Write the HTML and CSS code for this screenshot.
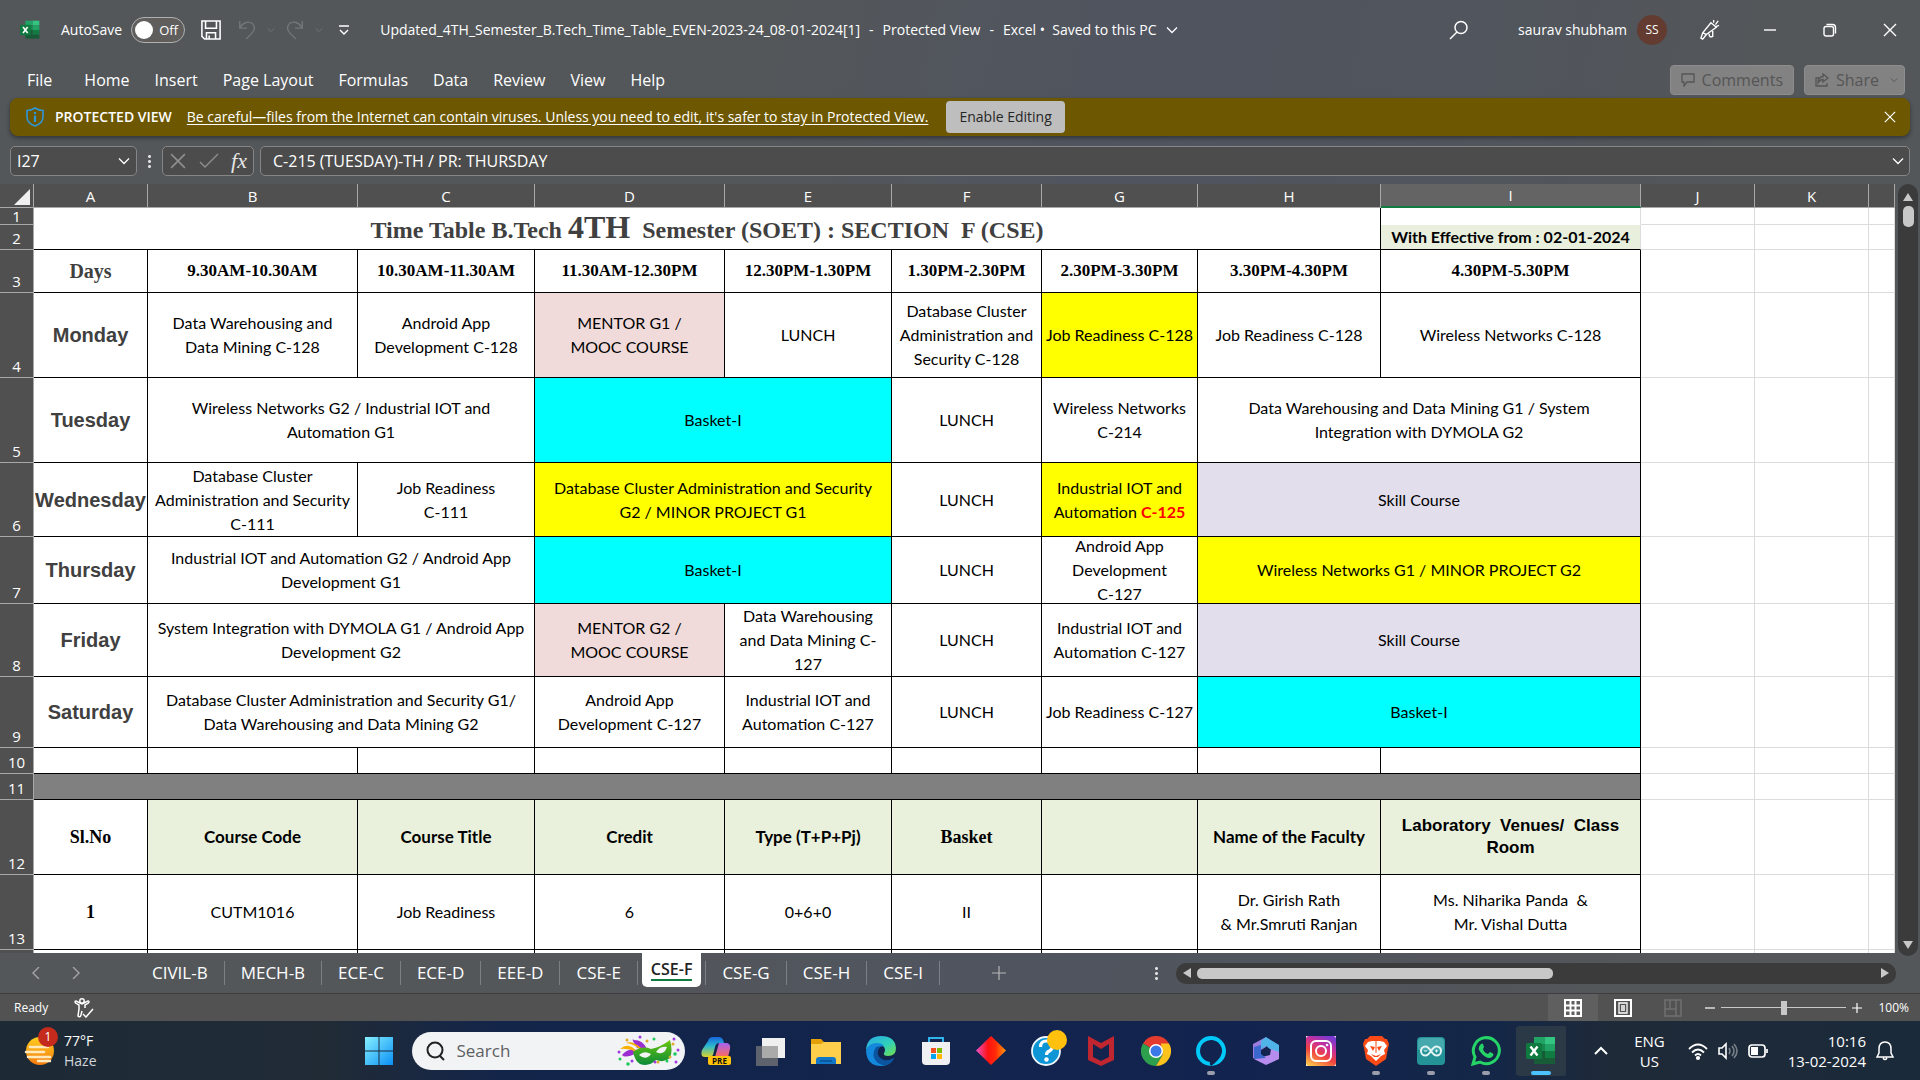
FILE: index.html
```html
<!DOCTYPE html>
<html lang="en">
<head>
<meta charset="utf-8">
<title>Updated_4TH_Semester_B.Tech_Time_Table - Excel</title>
<link rel="stylesheet" href="styles.css">
</head>
<body>
<svg class="defs" aria-hidden="true">
  <defs>
    <symbol id="chev" viewBox="0 0 12 12"><path d="M1 3.5l5 5 5-5" fill="none" stroke="currentColor" stroke-width="1.3"/></symbol>
    <symbol id="close" viewBox="0 0 14 14"><path d="M1 1l12 12M13 1L1 13" fill="none" stroke="currentColor" stroke-width="1.4"/></symbol>
    <symbol id="excel" viewBox="0 0 30 30">
      <rect x="8" y="1" width="11" height="7" fill="#21a366"/><rect x="19" y="1" width="10" height="7" fill="#33c481"/>
      <rect x="8" y="8" width="11" height="7" fill="#17884b"/><rect x="19" y="8" width="10" height="7" fill="#21a366"/>
      <rect x="8" y="15" width="11" height="7" fill="#185c37"/><rect x="19" y="15" width="10" height="7" fill="#107c41"/>
      <rect x="8" y="22" width="21" height="6" fill="#185c37"/>
      <rect x="0" y="7" width="16" height="16" rx="1.5" fill="#0f7a3f"/>
      <path d="M4.5 10.5l7 9M11.5 10.5l-7 9" stroke="#fff" stroke-width="2.4" fill="none"/>
    </symbol>
  </defs>
</svg>
<div class="app">
  <header class="titlebar">
    <svg class="i20"><use href="#excel"/></svg>
    <label class="autosave">AutoSave <span class="toggle"><input type="checkbox" role="switch"><span>Off</span></span></label>
    <button class="save" aria-label="Save"><svg class="i22" viewBox="0 0 22 22" fill="none" stroke="currentColor" stroke-width="1.7"><path d="M1 1h20v20H4l-3-3zM5 1v8h12V1M6 21v-7h10v7M9 17v4"/></svg></button>
    <button class="dim" aria-label="Undo"><svg class="i22" viewBox="0 0 22 22" fill="none" stroke="currentColor" stroke-width="1.5"><path d="M3 1v8h8M3 9C7 2 13 1 17 4c4 4 2 8-1 11l-6 6"/></svg><svg class="i8"><use href="#chev"/></svg></button>
    <button class="dim" aria-label="Redo"><svg class="i22" viewBox="0 0 22 22" fill="none" stroke="currentColor" stroke-width="1.5"><path d="M19 1v8h-8M19 9C15 2 9 1 5 4c-4 4-2 8 1 11l6 6"/></svg><svg class="i8"><use href="#chev"/></svg></button>
    <button class="customize" aria-label="Customize Quick Access Toolbar"><svg class="i12" viewBox="0 0 12 12" fill="none" stroke="currentColor" stroke-width="1.4"><path d="M1 2h10M2 6l4 4 4-4"/></svg></button>
    <button class="doc"><span>Updated_4TH_Semester_B.Tech_Time_Table_EVEN-2023-24_08-01-2024[1]</span><span>-</span><span>Protected View</span><span>-</span><span>Excel&nbsp;•&nbsp; Saved to this PC</span><svg class="i12"><use href="#chev"/></svg></button>
    <div class="right">
      <button aria-label="Search"><svg class="i20" viewBox="0 0 20 20" fill="none" stroke="currentColor" stroke-width="1.5"><circle cx="12" cy="7.500" r="6"/><path d="M8 12l-7 7"/></svg></button>
      <button class="user"><span>saurav shubham</span><span class="avatar">SS</span></button>
      <button class="win" aria-label="Coming soon"><svg class="i22" viewBox="0 0 22 22" fill="none" stroke="currentColor" stroke-width="1.5"><path d="M12 3l6 5L7 16l-4 5-2-1 2-6zM3 14l4 2M10 15q0 5 4 3v-6M15 3V0M17 5l3-4M18 7l3-1"/></svg></button>
      <button class="win" aria-label="Minimize"><svg class="i14" viewBox="0 0 14 14" stroke="currentColor" stroke-width="1.4"><path d="M1 7h12"/></svg></button>
      <button class="win" aria-label="Restore"><svg class="i14" viewBox="0 0 14 14" fill="none" stroke="currentColor" stroke-width="1.4"><rect x="1" y="3.500" width="9.500" height="9.500" rx="2"/><path d="M3.500 1.500h6q3 0 3 3v6"/></svg></button>
      <button class="win" aria-label="Close"><svg class="i14"><use href="#close"/></svg></button>
    </div>
  </header>

  <nav class="menu">
    <button class="file">File</button><button>Home</button><button>Insert</button><button>Page Layout</button><button>Formulas</button><button>Data</button><button>Review</button><button>View</button><button>Help</button>
    <div class="actions">
      <button class="gray"><svg class="i14" viewBox="0 0 14 14" fill="none" stroke="currentColor" stroke-width="1.3"><path d="M1 1h12v8H6l-3 4V9H1z"/></svg>Comments</button>
      <button class="gray"><svg class="i14" viewBox="0 0 14 14" fill="none" stroke="currentColor" stroke-width="1.3"><path d="M4 5H1v8h11v-3M8 1l5 4-5 4V6.500q-3 0-5 3.500 0-6 5-6.500z"/></svg>Share<svg class="i8 last"><use href="#chev"/></svg></button>
    </div>
  </nav>

  <div class="protect">
    <svg class="shield" viewBox="0 0 18 20" fill="none" stroke="#2f96d8" stroke-width="1.6"><path d="M9 1q4 2.500 8 2.500V10q0 6-8 9-8-3-8-9V3.500Q5 3.500 9 1z"/><path d="M9 5v2M9 8.500V15" stroke-width="2.200"/></svg>
    <strong>PROTECTED VIEW</strong>
    <a href="#">Be careful—files from the Internet can contain viruses. Unless you need to edit, it's safer to stay in Protected View.</a>
    <button class="enable">Enable Editing</button>
    <button class="dismiss" aria-label="Close message"><svg class="i12"><use href="#close"/></svg></button>
  </div>

  <div class="formula">
    <div class="box namebox"><input type="text" value="I27" aria-label="Name box"><svg class="i12"><use href="#chev"/></svg></div>
    <span class="dots"></span>
    <div class="box fx"><svg class="i16"><use href="#close"/></svg><svg class="i20" viewBox="0 0 20 16" fill="none" stroke="currentColor" stroke-width="1.4"><path d="M1 9l5 5L19 1"/></svg><button aria-label="Insert function"><i>fx</i></button></div>
    <div class="box content"><input type="text" value="C-215 (TUESDAY)-TH / PR: THURSDAY" aria-label="Formula bar"><svg class="i12"><use href="#chev"/></svg></div>
  </div>

  <main class="work">
    <div class="sheet">
      <table>
        <colgroup><col class="cr"><col class="ca"><col class="cb"><col class="cc"><col class="cd"><col class="ce"><col class="cf"><col class="cg"><col class="ch"><col class="ci"><col class="ca"><col class="ca"><col></colgroup>
        <thead><tr><th class="corner"><svg viewBox="0 0 16 16"><path d="M16 0v16H0z" fill="#f0f0f0"/></svg></th><th>A</th><th>B</th><th>C</th><th>D</th><th>E</th><th>F</th><th>G</th><th>H</th><th class="sel">I</th><th>J</th><th>K</th><th></th></tr></thead>
        <tbody>
          <tr class="h17"><th>1</th><td colspan="8" rowspan="2" class="title">Time Table B.Tech <span>4TH</span>&nbsp; Semester (SOET) : SECTION&nbsp; F (CSE)</td><td class="plain"></td><td class="g"></td><td class="g"></td><td class="g"></td></tr>
          <tr class="h25"><th>2</th><td class="eff">With Effective from : 02-01-2024</td><td class="g"></td><td class="g"></td><td class="g"></td></tr>
          <tr class="h43 times"><th>3</th><td class="days">Days</td><td>9.30AM-10.30AM</td><td>10.30AM-11.30AM</td><td>11.30AM-12.30PM</td><td>12.30PM-1.30PM</td><td>1.30PM-2.30PM</td><td>2.30PM-3.30PM</td><td>3.30PM-4.30PM</td><td>4.30PM-5.30PM</td><td class="g"></td><td class="g"></td><td class="g"></td></tr>
          <tr class="h85"><th>4</th><td class="day">Monday</td><td>Data Warehousing and<br>Data Mining C-128</td><td>Android App<br>Development C-128</td><td class="pink">MENTOR G1 /<br>MOOC COURSE</td><td>LUNCH</td><td>Database Cluster<br>Administration and<br>Security C-128</td><td class="yellow">Job Readiness C-128</td><td>Job Readiness C-128</td><td>Wireless Networks C-128</td><td class="g"></td><td class="g"></td><td class="g"></td></tr>
          <tr class="h85"><th>5</th><td class="day">Tuesday</td><td colspan="2">Wireless Networks G2 / Industrial IOT and<br>Automation G1</td><td colspan="2" class="cyan">Basket-I</td><td>LUNCH</td><td>Wireless Networks<br>C-214</td><td colspan="2">Data Warehousing and Data Mining G1 / System<br>Integration with DYMOLA G2</td><td class="g"></td><td class="g"></td><td class="g"></td></tr>
          <tr class="h74"><th>6</th><td class="day">Wednesday</td><td>Database Cluster<br>Administration and Security<br>C-111</td><td>Job Readiness<br>C-111</td><td colspan="2" class="yellow">Database Cluster Administration and Security<br>G2 / MINOR PROJECT G1</td><td>LUNCH</td><td class="yellow">Industrial IOT and<br>Automation <b class="red">C-125</b></td><td colspan="2" class="lilac">Skill Course</td><td class="g"></td><td class="g"></td><td class="g"></td></tr>
          <tr class="h67"><th>7</th><td class="day">Thursday</td><td colspan="2">Industrial IOT and Automation G2 / Android App<br>Development G1</td><td colspan="2" class="cyan">Basket-I</td><td>LUNCH</td><td><div class="tight">Android App<br>Development<br>C-127</div></td><td colspan="2" class="yellow">Wireless Networks G1 / MINOR PROJECT G2</td><td class="g"></td><td class="g"></td><td class="g"></td></tr>
          <tr class="h73"><th>8</th><td class="day">Friday</td><td colspan="2">System Integration with DYMOLA G1 / Android App<br>Development G2</td><td class="pink">MENTOR G2 /<br>MOOC COURSE</td><td>Data Warehousing<br>and Data Mining C-<br>127</td><td>LUNCH</td><td>Industrial IOT and<br>Automation C-127</td><td colspan="2" class="lilac">Skill Course</td><td class="g"></td><td class="g"></td><td class="g"></td></tr>
          <tr class="h71"><th>9</th><td class="day">Saturday</td><td colspan="2">Database Cluster Administration and Security G1/<br>Data Warehousing and Data Mining G2</td><td>Android App<br>Development C-127</td><td>Industrial IOT and<br>Automation C-127</td><td>LUNCH</td><td>Job Readiness C-127</td><td colspan="2" class="cyan">Basket-I</td><td class="g"></td><td class="g"></td><td class="g"></td></tr>
          <tr class="h26"><th>10</th><td></td><td></td><td></td><td></td><td></td><td></td><td></td><td></td><td></td><td class="g"></td><td class="g"></td><td class="g"></td></tr>
          <tr class="h26"><th>11</th><td colspan="9" class="band"></td><td class="g"></td><td class="g"></td><td class="g"></td></tr>
          <tr class="h75 heads"><th>12</th><td class="serif">Sl.No</td><td class="green">Course Code</td><td class="green">Course Title</td><td class="green">Credit</td><td class="green">Type (T+P+Pj)</td><td class="green serif">Basket</td><td class="green"></td><td class="green">Name of the Faculty</td><td class="green lab">Laboratory&nbsp; Venues/&nbsp; Class<br>Room</td><td class="g"></td><td class="g"></td><td class="g"></td></tr>
          <tr class="h75"><th>13</th><td class="num">1</td><td>CUTM1016</td><td>Job Readiness</td><td>6</td><td>0+6+0</td><td>II</td><td></td><td>Dr. Girish Rath<br>&amp; Mr.Smruti Ranjan</td><td>Ms. Niharika Panda&nbsp; &amp;<br>Mr. Vishal Dutta</td><td class="g"></td><td class="g"></td><td class="g"></td></tr>
          <tr class="h75"><th></th><td></td><td></td><td></td><td></td><td></td><td></td><td></td><td></td><td></td><td class="g"></td><td class="g"></td><td class="g"></td></tr>
        </tbody>
      </table>
    </div>
    <div class="vscroll"><svg viewBox="0 0 12 10"><path d="M6 1l5 8H1z"/></svg><span class="vthumb"></span><svg class="down" viewBox="0 0 12 10"><path d="M6 9L1 1h10z"/></svg></div>
  </main>

  <div class="tabs">
    <div class="arrows"><button aria-label="Previous sheet"><svg class="i12" viewBox="0 0 12 12" fill="none" stroke="currentColor" stroke-width="1.4"><path d="M9 0L3 6l6 6"/></svg></button><button aria-label="Next sheet"><svg class="i12" viewBox="0 0 12 12" fill="none" stroke="currentColor" stroke-width="1.4"><path d="M3 0l6 6-6 6"/></svg></button></div>
    <button class="tab">CIVIL-B</button><button class="tab">MECH-B</button><button class="tab">ECE-C</button><button class="tab">ECE-D</button><button class="tab">EEE-D</button><button class="tab">CSE-E</button><button class="tab active"><span>CSE-F</span></button><button class="tab">CSE-G</button><button class="tab">CSE-H</button><button class="tab">CSE-I</button>
    <button class="add" aria-label="New sheet"><svg class="i14" viewBox="0 0 14 14" stroke="currentColor" stroke-width="1.200"><path d="M7 0v14M0 7h14"/></svg></button>
    <span class="dots"></span>
    <div class="hscroll"><svg viewBox="0 0 10 12"><path d="M1 6l8-5v10z"/></svg><span class="hthumb"></span><svg class="end" viewBox="0 0 10 12"><path d="M9 6L1 1v10z"/></svg></div>
  </div>

  <footer class="status">
    <span>Ready</span>
    <svg class="i20 acc" viewBox="0 0 20 20" fill="none" stroke="currentColor" stroke-width="1.5"><circle cx="8" cy="3" r="2.200"/><path d="M1 4q0-2 3 0l4 2 4-2q3-2 3 0 0 1-4 3v3M1 4q0 1 4 3v4l-1 7q2 2 3-1l1-4M9 16l3 3 7-8"/></svg>
    <div class="views">
      <button class="on" aria-label="Normal view"><svg class="i18" viewBox="0 0 18 18" fill="none" stroke="currentColor" stroke-width="2"><path d="M1 1h16v16H1zM1 6.500h16M1 11.500h16M6.500 1v16M11.500 1v16"/></svg></button>
      <button aria-label="Page layout view"><svg class="i18" viewBox="0 0 18 18" fill="none" stroke="currentColor" stroke-width="2"><path d="M1 1h16v16H1z"/><path d="M5 4h8v10H5zM7 7h4M7 9h4M7 11h4" stroke-width="1.300"/></svg></button>
      <button class="off" aria-label="Page break preview"><svg class="i18" viewBox="0 0 18 18" fill="none" stroke="currentColor" stroke-width="1.500"><path d="M1 1h16v16H1zM6 1v9h6V1M1 10h5M12 10v7"/></svg></button>
    </div>
    <button class="z" aria-label="Zoom out"><svg class="i12" viewBox="0 0 12 12" stroke="currentColor" stroke-width="1.200"><path d="M1 6h10"/></svg></button>
    <input type="range" min="0" max="100" value="50" aria-label="Zoom">
    <button class="z" aria-label="Zoom in"><svg class="i12" viewBox="0 0 12 12" stroke="currentColor" stroke-width="1.200"><path d="M1 6h10M6 1v10"/></svg></button>
    <span class="pct">100%</span>
  </footer>

  <div class="taskbar">
    <button class="weather">
      <span class="wicon"><svg viewBox="0 0 32 32"><defs><linearGradient id="sun" x2="0" y2="1"><stop offset="0" stop-color="#ffce1f"/><stop offset="1" stop-color="#f47a10"/></linearGradient></defs><circle cx="16" cy="16" r="14" fill="url(#sun)"/><path d="M6 12h18M2 17h18M4 22h22M14 26h12" stroke="#ffe9bd" stroke-width="2.500" stroke-linecap="round"/></svg><b>1</b></span>
      <span class="wtext"><span>77°F</span><small>Haze</small></span>
    </button>
    <div class="pins">
      <button class="pin" aria-label="Start"><svg viewBox="0 0 30 30"><defs><linearGradient id="w" x2="1" y2="1"><stop offset="0" stop-color="#86f0ff"/><stop offset="1" stop-color="#0a90f5"/></linearGradient></defs><path d="M1 1h13.500v13.500H1zM15.500 1H29v13.500H15.500zM1 15.500h13.500V29H1zM15.500 15.500H29V29H15.500z" fill="url(#w)"/></svg></button>
      <label class="search"><svg class="i20" viewBox="0 0 20 20" fill="none" stroke="#222" stroke-width="2"><circle cx="9" cy="9" r="7.500"/><path d="M14 15l4 4"/></svg><input type="search" placeholder="Search">
        <svg class="mask" viewBox="0 0 64 32"><defs><linearGradient id="mg" x2="0" y2="1"><stop offset="0" stop-color="#6cc60d"/><stop offset="1" stop-color="#0a8a3a"/></linearGradient></defs><path d="M20 13Q13 2 17 5q9 0 13 9zM20 18Q8 24 5 20q6-7 15-5z" fill="#9b2fd0"/><path d="M20 17Q12 6 3 14q8-1 17 3zM24 13Q15 5 9 8q8 1 15 7z" fill="#f9b000"/><path d="M16 17Q25 10 34 14 44 12 53 5q3 10 0 18-6 5-14 2-7 7-16 4-5-3-7-12z" fill="url(#mg)"/><path d="M22 20q5-5 12-1-5 7-12 1zM39 17q4-6 11-5-3 9-11 5z" fill="#f2f3f5"/><g fill="#a03ae0"><circle cx="23" cy="2" r="1.500"/><circle cx="57" cy="4" r="1.500"/><circle cx="61" cy="15" r="1.500"/><circle cx="2" cy="17" r="1.500"/><circle cx="15" cy="26" r="1.500"/><circle cx="38" cy="27" r="1.500"/><circle cx="59" cy="27" r="1.500"/></g><g fill="#1cc95a"><circle cx="37" cy="4" r="1.500"/><circle cx="3" cy="24" r="1.500"/><circle cx="11" cy="29" r="1.800"/><circle cx="50" cy="26" r="1.500"/><circle cx="58" cy="19" r="1.800"/></g><g fill="#dda92a"><circle cx="10" cy="5" r="1.500"/><circle cx="30" cy="6" r="1.500"/><circle cx="56" cy="9" r="1.500"/><circle cx="41" cy="27" r="1.500"/><circle cx="53" cy="22" r="1.500"/></g></svg></label>
      <button class="pin" aria-label="Copilot"><svg viewBox="0 0 30 30"><defs><linearGradient id="cp1" x2="0" y2="1"><stop offset="0" stop-color="#1766dd"/><stop offset=".45" stop-color="#2ab8d0"/><stop offset="1" stop-color="#d8d42b"/></linearGradient><linearGradient id="cp2" x2="0" y2="1"><stop offset="0" stop-color="#a561f0"/><stop offset="1" stop-color="#ff6c58"/></linearGradient></defs><path d="M7 5q1-4 5-4h6q4 0 5 6h-5q-3 0-4 4l-2 8q-1 2-4 2H4q-5 0-3-7z" fill="url(#cp1)"/><path d="M18 7h8q4 1 3 6l-2 8H14z" fill="url(#cp2)"/><rect x="7" y="20" width="23" height="9" rx="2" fill="#ffc40a"/><text x="18.500" y="27.500" class="pre">PRE</text></svg></button>
      <button class="pin" aria-label="Task view"><svg viewBox="0 0 30 30"><path d="M6 2h23v20H6z" fill="#f0f0f1"/><path d="M0 10h22v20H0z" fill="#777" opacity=".75"/><path d="M6 10h16v12H6z" fill="#aaa"/></svg></button>
      <button class="pin" aria-label="File Explorer"><svg viewBox="0 0 30 30"><path d="M0 3h10l3 3h8v6H0z" fill="#e3a008"/><path d="M0 8h10l3-2h17v22H0z" fill="#fdcf4b"/><path d="M5 28v-4q0-3 3-3h14q3 0 3 3v4z" fill="#1277c9"/><path d="M9 25h12" stroke="#0a4f91" stroke-width="1.500"/></svg></button>
      <button class="pin" aria-label="Edge"><svg viewBox="0 0 30 30"><defs><linearGradient id="ed" x2="1" y2="1"><stop offset="0" stop-color="#2ba7e8"/><stop offset=".55" stop-color="#2fd0bb"/><stop offset="1" stop-color="#74e04a"/></linearGradient></defs><path d="M0 14Q1 0 15 0q14 0 15 12 0 8-8 8-5 0-4-3 1-1 1-3 0-5-7-5-9 0-12 5z" fill="url(#ed)"/><path d="M0 15Q2 7 11 7q5 0 7 3-7 0-7 7 0 8 9 8 4 0 8-3-4 8-13 8Q1 30 0 15z" fill="#1388dc"/><path d="M10 11q-5 8 0 14 4 5 11 4 5-2 7-7-5 3-10 2-8-3-6-10 1-2 3-4z" fill="#0b54a0"/></svg></button>
      <button class="pin" aria-label="Microsoft Store"><svg viewBox="0 0 30 30"><path d="M8 8V2h14v6" fill="none" stroke="#2fb4ee" stroke-width="2"/><path d="M1 6h28v19q0 4-4 4H5q-4 0-4-4z" fill="#f0f0f2"/><path d="M10 12h5v5h-5z" fill="#f25022"/><path d="M16 12h5v5h-5z" fill="#7fba00"/><path d="M10 18h5v5h-5z" fill="#00a4ef"/><path d="M16 18h5v5h-5z" fill="#ffb900"/></svg></button>
      <button class="pin" aria-label="Diamond app"><svg viewBox="0 0 30 30"><defs><linearGradient id="dm"><stop offset="0" stop-color="#f052c8"/><stop offset=".4" stop-color="#ff1212"/><stop offset=".65" stop-color="#ff2a08"/><stop offset="1" stop-color="#ff9a08"/></linearGradient></defs><path d="M15 0l15 14.500L15 29 0 14.500z" fill="url(#dm)"/></svg></button>
      <button class="pin" aria-label="Get help"><svg viewBox="0 0 30 30" overflow="visible"><circle cx="15" cy="15" r="14" fill="#0d95d5" stroke="#f1f8fc" stroke-width="1.800"/><path d="M9.500 11q0-6 6-6 6 0 6 5 0 3-3 5-3 1-3 4" fill="none" stroke="#fff" stroke-width="3.200"/><circle cx="15.500" cy="23.500" r="2.200" fill="#fff"/><circle cx="26" cy="4" r="10" fill="#ffc10e"/></svg></button>
      <button class="pin" aria-label="McAfee"><svg viewBox="0 0 30 30"><path d="M2 0l13 7 13-7v24l-13 6-13-6zM7 8v13l8 4 8-4V8l-8 5z" fill="#bf2630" fill-rule="evenodd"/></svg></button>
      <button class="pin" aria-label="Chrome"><svg viewBox="0 0 30 30"><path d="M15 15L2 7.500A15 15 0 0 1 28 7.500z" fill="#e33b2e"/><path d="M2 7.500A15 15 0 0 0 15 30l6.500-11z" fill="#2da04e"/><path d="M28 7.500A15 15 0 0 1 15 30l6.500-11L20 7.500z" fill="#fcc31c"/><circle cx="15" cy="15" r="7" fill="#fff"/><circle cx="15" cy="15" r="5.500" fill="#3b79e8"/></svg></button>
      <button class="pin run" aria-label="Alexa"><svg viewBox="0 0 30 30"><path d="M15 0a15 15 0 1 0 0 30q-2-2-1-4A11 11 0 1 1 26 16q-1 7-11 14A15 15 0 0 0 15 0z" fill="#00c8f8"/></svg></button>
      <button class="pin" aria-label="Microsoft 365"><svg viewBox="0 0 30 30"><path d="M2 8L15 1v10l-5 3v12l-8-4z" fill="#9b7de0"/><path d="M15 1l13 8v8l-9-4-4-3-5 3V5z" fill="#50b4e8"/><path d="M28 16v7l-13 6-12-6 16-4 1-6z" fill="#b68cee"/><path d="M10 9v9l5 4-12 1V11z" fill="#3a68cc"/></svg></button>
      <button class="pin" aria-label="Instagram"><svg viewBox="0 0 30 30"><defs><linearGradient id="ig" x1=".2" y1="1" x2=".7" y2="0"><stop offset="0" stop-color="#fdc14b"/><stop offset=".4" stop-color="#f0443e"/><stop offset=".7" stop-color="#c9309a"/><stop offset="1" stop-color="#7a3ad0"/></linearGradient></defs><rect width="30" height="30" fill="#fff"/><rect width="30" height="30" rx="3" fill="url(#ig)"/><g fill="none" stroke="#fff" stroke-width="2"><rect x="5" y="5" width="20" height="20" rx="5"/><circle cx="15" cy="15" r="5"/></g><circle cx="21" cy="9" r="1.300" fill="#fff"/></svg></button>
      <button class="pin run" aria-label="Brave"><svg viewBox="0 0 30 30"><path d="M9 0h12l3 3h2l2 5-1 4-2 11-10 7-10-7L3 12 2 8l2-5h2z" fill="#fb4a16"/><path d="M7 6l4-1h8l4 1 3 4-3 4 1 4-4 2-5 5-5-5-4-2 1-4-3-4z" fill="#fff"/><path d="M9 10l5 1-2 4zM21 10l-5 1 2 4zM10 18l5 2 5-2-3 3h-4z" fill="#fb4a16"/><path d="M15 5v12" stroke="#fb4a16"/></svg></button>
      <button class="pin run" aria-label="Arduino"><svg viewBox="0 0 30 30"><rect x="1" y="1" width="28" height="28" rx="4" fill="#249398"/><rect x="2" y="2" width="26" height="13" rx="4" fill="#45a9ad"/><path d="M15 15q-3-4.500-5.500-4.500a4.500 4.500 0 0 0 0 9Q12 19.500 15 15q3-4.500 5.500-4.500a4.500 4.500 0 0 1 0 9Q18 19.500 15 15z" fill="none" stroke="#e5f4f4" stroke-width="2"/><path d="M8 15h3M19 15h3M20.500 13.500v3" stroke="#e5f4f4"/></svg></button>
      <button class="pin run" aria-label="WhatsApp"><svg viewBox="0 0 30 30"><path d="M2 28l2-7A13 13 0 1 1 9 26z" fill="none" stroke="#25d366" stroke-width="3"/><path d="M10 8q-5 4 1 10 6 6 10 3 3-3 0-4l-2-1-2 2q-4-1-5-5l1-2-1-3q-1-1-2 0z" fill="#25d366"/></svg></button>
      <button class="pin current" aria-label="Excel"><svg><use href="#excel"/></svg></button>
    </div>
    <div class="tray">
      <button aria-label="Hidden icons"><svg class="i14" viewBox="0 0 14 14" fill="none" stroke="currentColor" stroke-width="2"><path d="M1 10l6-6 6 6"/></svg></button>
      <button class="lang">ENG<br>US</button>
      <button class="net" aria-label="Network, volume and battery">
        <svg class="i20" viewBox="0 0 20 20" fill="none" stroke="currentColor" stroke-width="1.800"><path d="M1 8q9-9 18 0M4 11.500q6-6 12 0M7 14.500q3-3 6 0"/><circle cx="10" cy="17" r="1.200" fill="currentColor"/></svg>
        <svg class="i20" viewBox="0 0 20 20" fill="none" stroke="currentColor" stroke-width="1.600"><path d="M1 7h3l4-4v14l-4-4H1z"/><path d="M11 7q2 3 0 6M14 5q4 5 0 10M16 3q6 7 0 14" opacity=".4"/></svg>
        <svg class="i20" viewBox="0 0 20 20" fill="none" stroke="currentColor" stroke-width="1.700"><rect x="1" y="4" width="16" height="12" rx="3"/><path d="M19 8v4"/><path d="M3 6h7v8H3z" fill="currentColor" stroke="none"/></svg>
      </button>
      <button class="clock">10:16<br>13-02-2024</button>
      <button aria-label="Notifications"><svg class="i20" viewBox="0 0 20 20" fill="none" stroke="currentColor" stroke-width="1.500"><path d="M10 1q-6 0-6 7v4l-2 4h16l-2-4V8q0-7-6-7zM8 17q2 3 4 0"/></svg></button>
    </div>
  </div>
</div>
</body>
</html>
```

FILE: styles.css
```css
* { box-sizing: border-box; }
body { margin: 0; font: 15px/20px "Open Sans", "Noto Sans", sans-serif; color: #fff; }
button, input { font: inherit; color: inherit; background: none; border: 0; padding: 0; margin: 0; }
svg { display: block; flex: none; }
.defs { position: absolute; width: 0; height: 0; }
.i8 { width: 8px; height: 8px; }
.i12 { width: 12px; height: 12px; }
.i14 { width: 14px; height: 14px; }
.i16 { width: 16px; height: 16px; }
.i18 { width: 18px; height: 18px; }
.i20, .i22 { width: 20px; height: 20px; }

.app { height: 100vh; display: flex; flex-direction: column; overflow: hidden; background: linear-gradient(100deg, #53575a 0%, #53575a 36%, #50545f 55%, #51555c 72%, #53575a 85%); }
.titlebar, .menu, .protect, .formula, .tabs, .status, .taskbar { flex: none; }

/* Title bar */
.titlebar { height: 60px; display: flex; align-items: center; padding-left: 20px; font-size: 14px; }
.titlebar button { display: flex; align-items: center; gap: 10px; }
.autosave { display: flex; align-items: center; gap: 9px; margin-left: 21px; }
.toggle { width: 54px; height: 26px; display: flex; align-items: center; gap: 6px; border: 1px solid #b0b0b0; border-radius: 13px; background: #605e5c; font-size: 13px; padding-left: 3px; }
.toggle input { appearance: none; width: 18px; height: 18px; border-radius: 50%; background: #fff; }
.save { margin-left: 16px; }
.dim { color: #74777a; margin-left: 16px; }
.dim + .dim { margin-left: 10px; }
.customize { margin-left: 15px; }
.titlebar .doc { margin-left: 30px; gap: 9px; white-space: nowrap; }
.right { display: flex; align-items: center; margin-left: auto; }
.user { margin: 0 28px 0 49px; }
.user .avatar { width: 30px; height: 30px; border-radius: 50%; background: #633b30; font-size: 12px; line-height: 30px; text-align: center; }
.right .win { width: 60px; justify-content: center; }
.user + .win { margin-left: -15px; }

/* Ribbon tabs */
.menu { height: 38px; display: flex; align-items: center; gap: 25px; padding: 2px 15px 0 27px; font-size: 16px; }
.menu .file { margin-right: 7px; }
.actions { display: flex; gap: 10px; margin-left: auto; }
.gray { display: flex; align-items: center; gap: 7px; height: 30px; padding: 0 10px; background: #828282; border: 1px solid #8d8d8d; border-radius: 4px; color: #555; }
.gray .last { margin: 0 -4px 0 4px; }

/* Protected view message */
.protect { height: 38px; display: flex; align-items: center; margin: 0 10px; padding: 0 14px 0 16px; border-radius: 8px; background: #6d5700; box-shadow: 0 2px 4px rgba(0, 0, 0, .4); font-size: 14px; }
.shield { width: 18px; height: 20px; }
.protect strong { font-weight: 600; margin: 0 15px 0 11px; }
.protect a { color: #fff; text-underline-offset: 2px; }
.enable { height: 32px; padding: 0 13px; margin-left: 18px; border-radius: 4px; background: #bebebe; color: #262626; }
.dismiss { margin-left: auto; }

/* Formula bar */
.formula { display: flex; align-items: center; height: 30px; margin: 10px 10px 8px; font-size: 16px; }
.box { display: flex; align-items: center; height: 30px; border: 1px solid #868686; border-radius: 5px; background: #4c4c4c; }
.box input { flex: 1; min-width: 0; }
.namebox { width: 127px; padding: 0 6px; }
.dots { width: 25px; height: 14px; background: radial-gradient(circle, #e0e0e0 1px, transparent 2px) center top / 25px 5px repeat-y; }
.fx { width: 92px; padding: 0 6px 0 7px; justify-content: space-between; color: #8f8f8f; margin-right: 6px; }
.fx button { font: 22px/26px "Liberation Serif", serif; color: #e6e6e6; }
.content { flex: 1; padding: 0 5px 0 12px; }

/* Worksheet */
.work { flex: 1; min-height: 0; display: flex; gap: 3px; padding-right: 2px; }
.sheet { flex: 1; min-width: 0; overflow: hidden; background: #fff; }
table { table-layout: fixed; width: 100%; border-collapse: separate; border-spacing: 0; color: #000; }
.cr { width: 34px; } .ca { width: 114px; } .cb { width: 210px; } .cc { width: 177px; } .cd { width: 190px; } .ce { width: 167px; }
.cf { width: 150px; } .cg { width: 156px; } .ch { width: 183px; } .ci { width: 260px; }
th { padding: 0; font-weight: 400; font-size: 15px; line-height: 16px; color: #fff; background: #505050; border: solid #a8a8a8; border-width: 0 1px 1px 0; vertical-align: bottom; }
thead th { height: 24px; vertical-align: middle; }
tbody th { padding-bottom: 3px; }
.h17 th { padding: 0; }
.sel { background: #646464; border-bottom: 2px solid #107c41; }
.corner svg { width: 16px; height: 16px; margin: 3px 3px 0 auto; }
td { padding: 0; border: solid #000; border-width: 0 1px 1px 0; text-align: center; vertical-align: middle; font: 16px/24px Lato, "Open Sans", sans-serif; white-space: nowrap; }
.h17 { height: 17px; } .h25 { height: 25px; } .h43 { height: 43px; } .h85 { height: 85px; } .h74 { height: 74px; } .h67 { height: 67px; }
.h73 { height: 73px; } .h71 { height: 71px; } .h26 { height: 26px; } .h75 { height: 75px; }
.g { border-color: #dcdcdc; }
.plain { border-color: transparent #dcdcdc transparent transparent; }
.title { font: bold 24px/38px "Liberation Serif", serif; color: #404040; }
.title span { font-size: 32px; }
.eff { font-weight: 700; background: #e9efdd; border-right-color: #dcdcdc; }
.times td { font: bold 17px/20px "Liberation Serif", serif; }
.times .days { font-size: 20px; color: #404040; }
.day { font: bold 20px/24px "Liberation Sans", sans-serif; color: #404040; }
.pink { background: #f0dbda; }
.cyan { background: #0ff; }
.yellow { background: #ff0; }
.lilac { background: #e2deec; }
.green { background: #e9f0dc; }
.band { background: #808080; }
.red { color: #f00; }
.tight { margin: -3px 0; }
.heads td { font-size: 17px; font-weight: 700; }
.heads .serif, .num { font: bold 18px/24px "Liberation Serif", serif; }
.heads .lab { font: bold 17px/22px "Liberation Sans", sans-serif; }
.vscroll { flex: none; width: 20px; margin-bottom: -3px; padding: 8px 4px 6px; display: flex; flex-direction: column; align-items: center; gap: 4px; border-radius: 10px; background: #3b3b3b; fill: #c8c8c8; }
.vscroll svg { width: 12px; height: 10px; }
.vthumb { width: 11px; height: 21px; border-radius: 5px; background: #c8c8c8; }
.vscroll .down { margin-top: auto; }

/* Sheet tabs */
.tabs { height: 40px; display: flex; align-items: center; padding-right: 24px; font-size: 17px; }
.arrows { display: flex; gap: 28px; width: 136px; padding-left: 30px; color: #a6a6a6; }
.tab { height: 24px; padding: 0 16px; border-right: 1px solid #7c7f86; }
.tab.active { align-self: flex-start; height: 34px; margin: 0 4px; padding: 0 9px; border: 0; border-radius: 0 0 5px 5px; background: #fff; color: #222; font-size: 16px; font-weight: 600; }
.tab.active span { display: block; border-bottom: 2px solid #107c41; }
.tab.active + .tab { border-left: 1px solid #7c7f86; }
.add { margin-left: 52px; color: #b5b5b5; }
.tabs .dots { margin-left: auto; }
.hscroll { width: 720px; height: 21px; margin-left: 7px; padding: 0 6px; display: flex; align-items: center; gap: 5px; border-radius: 10px; background: #3b3b3b; fill: #c8c8c8; }
.hscroll svg { width: 10px; height: 12px; }
.hthumb { width: 356px; height: 11px; border-radius: 5px; background: #c8c8c8; }
.hscroll .end { margin-left: auto; }

/* Status bar */
.status { height: 28px; display: flex; align-items: center; padding: 0 11px 0 14px; border-top: 1px solid #3d3d3d; background: #525252; font-size: 12px; }
.acc { margin-left: 26px; }
.views { display: flex; margin-left: auto; align-self: stretch; }
.views button { width: 50px; display: flex; align-items: center; justify-content: center; }
.views .on { background: #5f5f5f; }
.views .off { color: #707070; }
.z { margin: 0 5px; }
.views + .z { margin-left: 6px; }
input[type=range] { appearance: none; width: 125px; height: 18px; background: linear-gradient(#c8c8c8, #c8c8c8) center / 100% 1px no-repeat; }
input[type=range]::-webkit-slider-thumb { appearance: none; width: 6px; height: 14px; background: #c8c8c8; }
.pct { width: 41px; text-align: right; }

/* Taskbar */
.taskbar { height: 59px; display: grid; grid-template-columns: 1fr auto 1fr; align-items: center; background: linear-gradient(90deg, #1d2a36 0%, #202b36 17%, #14254a 26%, #12234f 65%, #142747 78%, #1f2a38 84%, #1a2a3a 100%); }
.taskbar button { display: flex; align-items: center; justify-content: center; }
.taskbar .weather { justify-self: start; margin-left: 24px; gap: 8px; font-size: 14px; text-align: left; }
.wicon { position: relative; width: 32px; height: 32px; }
.wicon b { position: absolute; right: -2px; top: -8px; width: 20px; height: 20px; border-radius: 50%; background: #c42b1c; font-size: 12px; font-weight: 400; text-align: center; }
.wtext span, .wtext small { display: block; }
.wtext small { font-size: 14px; color: #d0d4d8; }
.pins { display: flex; align-items: center; }
.pins .pin { position: relative; width: 55px; height: 50px; border-radius: 6px; }
.pin svg { width: 30px; height: 30px; }
.pre { font: bold 8px "Open Sans", sans-serif; text-anchor: middle; fill: #111; }
.run::after, .current::after { content: ""; position: absolute; bottom: 1px; left: 50%; width: 8px; height: 4px; margin-left: -4px; border-radius: 2px; background: #9a9dac; }
.current { background: linear-gradient(#2b3947, #2b3947) center / 50px 50px no-repeat; }
.current::after { width: 20px; margin-left: -10px; background: #4cc2ff; }
.search { display: flex; align-items: center; gap: 11px; width: 273px; height: 38px; margin: 0 4px 0 5px; padding: 0 4px 0 14px; border-radius: 19px; background: #f2f3f5; }
.search input { flex: 1; min-width: 0; font-size: 17px; }
.search input::placeholder { color: #5d5f63; opacity: 1; }
.mask { width: 64px; height: 32px; }
.tray { display: flex; justify-content: flex-end; align-items: center; padding-right: 25px; font-size: 15px; }
.lang { margin: 0 23px 0 26px; }
.net { gap: 10px; margin-right: 20px; }
.clock { margin-right: 9px; text-align: right; }
```
